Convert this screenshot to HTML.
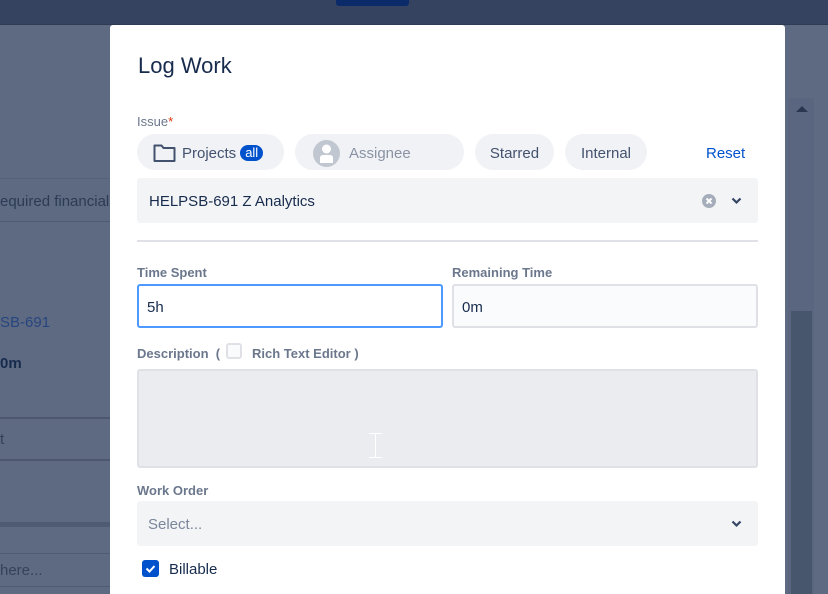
<!DOCTYPE html>
<html><head><style>
*{box-sizing:border-box;margin:0;padding:0}
html,body{width:828px;height:594px;overflow:hidden}
body{background:#5e6a82;font-family:"Liberation Sans",sans-serif;position:relative}
.abs{position:absolute}
.top{left:0;top:0;width:828px;height:25px;background:#354360;border-bottom:1px solid #2f3b55}
.btn{left:336px;top:0;width:73px;height:6px;background:#0b2a6a;border-radius:0 0 3px 3px}
.modal{left:110px;top:25px;width:675px;height:569px;background:#fff;border-radius:3px 3px 0 0}
.lbl{font-size:13px;color:#6b778c;font-weight:bold}
.pill{top:134px;height:36px;border-radius:18px;background:#f1f2f5;font-size:15px;color:#42526e;display:flex;align-items:center;padding-top:2px}
.inp{border-radius:3px;font-size:15px;color:#172b4d;display:flex;align-items:center;padding-left:10px;padding-top:2px}
</style></head><body>
<div class="abs top"></div>
<div class="abs btn"></div>
<div class="abs" style="left:0;top:178px;width:110px;height:1px;background:#56627a"></div>
<div class="abs" style="left:0;top:193px;font-size:15px;color:#2c3a55">equired financial</div>
<div class="abs" style="left:0;top:221px;width:110px;height:1px;background:#4f5b73"></div>
<div class="abs" style="left:0;top:314px;font-size:15px;color:#27457e">SB-691</div>
<div class="abs" style="left:0;top:355px;font-size:15px;color:#172b4d;font-weight:bold">0m</div>
<div class="abs" style="left:0;top:417px;width:110px;height:2px;background:#4d5870"></div>
<div class="abs" style="left:0;top:431px;font-size:15px;color:#33405a">t</div>
<div class="abs" style="left:0;top:459px;width:110px;height:2px;background:#4d5870"></div>
<div class="abs" style="left:0;top:522px;width:110px;height:5px;background:#4f5b73"></div>
<div class="abs" style="left:0;top:553px;width:110px;height:1px;background:#4f5b73"></div>
<div class="abs" style="left:0;top:562px;font-size:15px;color:#36425c">here...</div>
<div class="abs" style="left:0;top:586px;width:110px;height:1px;background:#4f5b73"></div>
<div class="abs" style="left:788px;top:98px;width:26px;height:496px;background:#5a6680"></div>
<div class="abs" style="left:796px;top:106px;width:0;height:0;border-left:6px solid transparent;border-right:6px solid transparent;border-bottom:6px solid #2a3550"></div>
<div class="abs" style="left:791px;top:311px;width:21px;height:283px;background:#48566d"></div>

<div class="abs modal"></div>
<div class="abs" style="left:138px;top:53px;font-size:22px;color:#172b4d">Log Work</div>
<div class="abs lbl" style="left:137px;top:114px;font-weight:normal;color:#6b778c">Issue<span style="color:#de350b">*</span></div>
<div class="abs pill" style="left:137px;width:147px;padding-left:16px">
<svg width="23" height="20" viewBox="0 0 23 20"><path d="M1.5 2.5h7l2 2.5h11v13h-20z" fill="none" stroke="#42526e" stroke-width="2" stroke-linejoin="round"/></svg>
<span style="margin-left:6px">Projects</span><span style="margin-left:4px;background:#0052cc;color:#fff;font-size:13px;border-radius:8px;padding:0 5px;line-height:16px">all</span></div>
<div class="abs pill" style="left:295px;width:169px;padding-left:18px;color:#8993a4">
<svg width="27" height="27" viewBox="0 0 27 27"><circle cx="13.5" cy="13.5" r="13.5" fill="#c1c7d0"/><circle cx="13.5" cy="9" r="4.5" fill="#fff"/><path d="M7 23v-5q0-3 3-3h7q3 0 3 3v5z" fill="#fff"/></svg>
<span style="margin-left:9px">Assignee</span></div>
<div class="abs pill" style="left:475px;width:79px;justify-content:center">Starred</div>
<div class="abs pill" style="left:565px;width:82px;justify-content:center">Internal</div>
<div class="abs" style="left:706px;top:145px;font-size:15px;color:#0052cc">Reset</div>
<div class="abs inp" style="left:137px;top:178px;width:621px;height:45px;background:#f3f4f6;padding-left:12px">HELPSB-691 Z Analytics</div>
<svg class="abs" style="left:702px;top:194px" width="14" height="14" viewBox="0 0 14 14"><circle cx="7" cy="7" r="7" fill="#a5adba"/><path d="M4.5 4.5l5 5M9.5 4.5l-5 5" stroke="#fff" stroke-width="2"/></svg>
<svg class="abs" style="left:731px;top:197px" width="11" height="8" viewBox="0 0 11 8"><path d="M1.5 1.5l4 4 4-4" fill="none" stroke="#344563" stroke-width="2.2"/></svg>
<div class="abs" style="left:137px;top:240px;width:621px;height:2px;background:#dfe1e6"></div>
<div class="abs lbl" style="left:137px;top:265px">Time Spent</div>
<div class="abs lbl" style="left:452px;top:265px">Remaining Time</div>
<div class="abs inp" style="left:137px;top:284px;width:306px;height:44px;border:2px solid #4c9aff;background:#fff;padding-left:8px">5h</div>
<div class="abs inp" style="left:452px;top:284px;width:306px;height:44px;border:2px solid #dfe1e6;background:#fafbfc;padding-left:8px">0m</div>
<div class="abs lbl" style="left:137px;top:346px">Description &nbsp;( </div>
<div class="abs" style="left:226px;top:343px;width:16px;height:16px;border:2px solid #dfe1e6;border-radius:3px;background:#fafbfc"></div>
<div class="abs lbl" style="left:252px;top:346px">Rich Text Editor )</div>
<div class="abs" style="left:137px;top:369px;width:621px;height:99px;border:2px solid #dfe1e6;border-radius:3px;background:#ebecf0"></div>
<div class="abs" style="left:369px;top:433px;width:13px;height:25px;border-top:1px solid #fff;border-bottom:1px solid #fff"><div style="margin-left:6px;width:1px;height:24px;background:#fff"></div></div>
<div class="abs lbl" style="left:137px;top:483px">Work Order</div>
<div class="abs inp" style="left:137px;top:501px;width:621px;height:45px;background:#f3f4f6;color:#7a869a;padding-left:11px">Select...</div>
<svg class="abs" style="left:731px;top:520px" width="11" height="8" viewBox="0 0 11 8"><path d="M1.5 1.5l4 4 4-4" fill="none" stroke="#344563" stroke-width="2.2"/></svg>
<div class="abs" style="left:142px;top:560px;width:17px;height:17px;background:#0052cc;border-radius:3px"><svg width="17" height="17" viewBox="0 0 17 17"><path d="M4.5 8.5l3 3 5-5.5" fill="none" stroke="#fff" stroke-width="2"/></svg></div>
<div class="abs" style="left:169px;top:561px;font-size:15px;color:#172b4d">Billable</div>
</body></html>
